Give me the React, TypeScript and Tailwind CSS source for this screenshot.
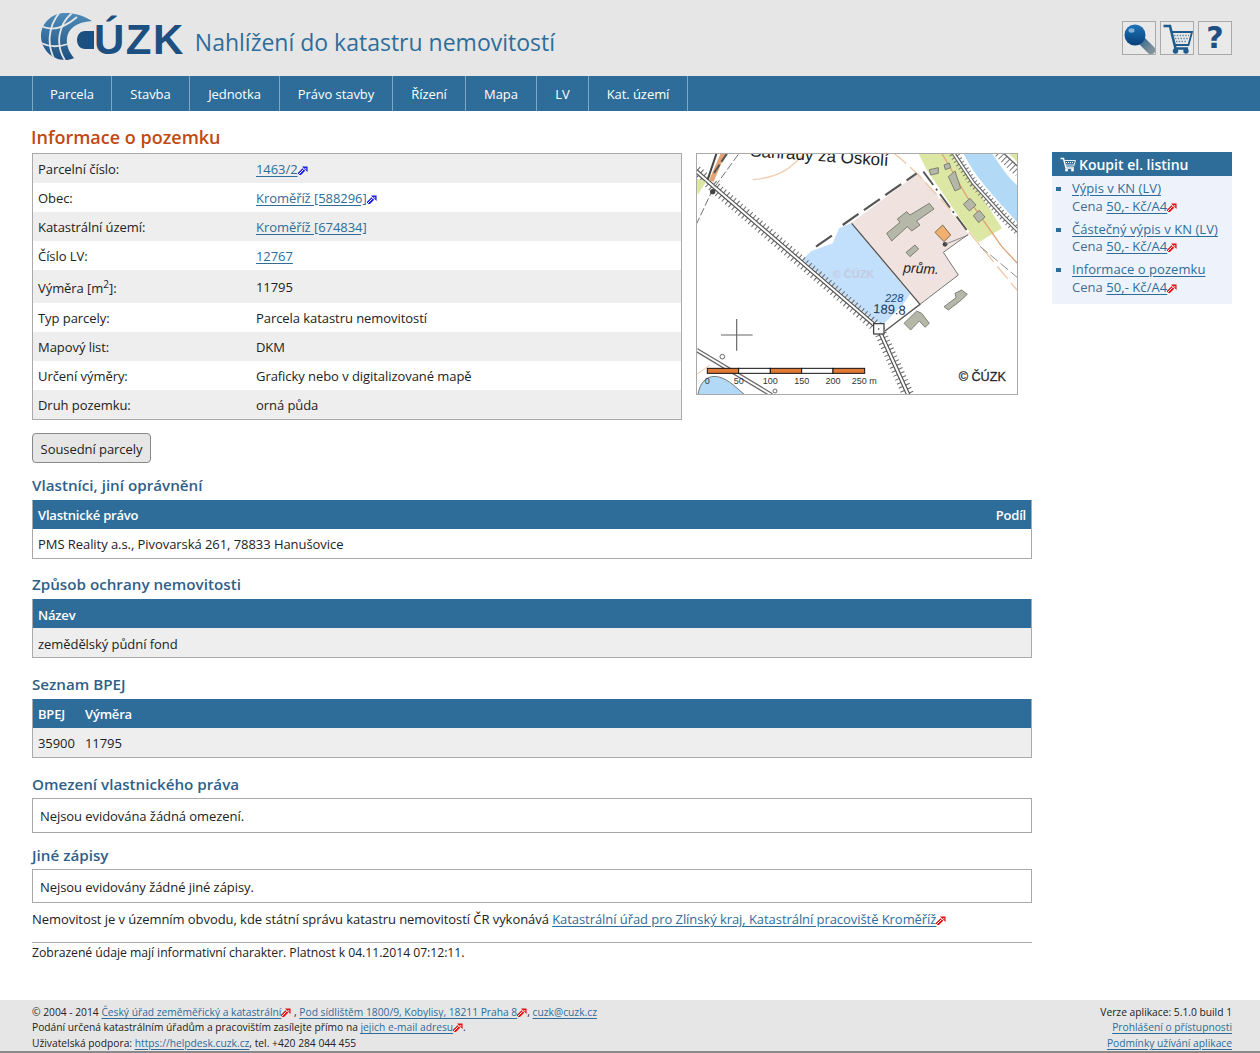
import React from "react";

const FONT = "font-['Open_Sans','Liberation_Sans',sans-serif]";

function Arrow({ color = "#e01010" }: { color?: string }) {
  return (
    <svg width="10" height="9" viewBox="0 0 11 10" className="inline-block align-[-1px]">
      <path d="M1 9.4 L6.5 3.8" stroke={color} strokeWidth="4" fill="none" />
      <path d="M0.8 9.2 L6.2 3.8" stroke="#ffffff" strokeWidth="1.1" fill="none" />
      <path d="M4.4 0.6 H10.6 V6.8 Z" fill={color} />
      <path d="M7 2.2 H9.2 V4.4 Z" fill="#ffffff" opacity="0.7" />
    </svg>
  );
}

function L({ children, ext }: { children: React.ReactNode; ext?: "red" | "blue" }) {
  return (
    <a href="#" className="text-[#2e6d9a] underline underline-offset-2">
      {children}
      {ext === "red" && <Arrow />}
      {ext === "blue" && <Arrow color="#1a1ae0" />}
    </a>
  );
}

function Logo() {
  const outer = "M51 9 C42 3 32 1 24 1 C11 1 0 11 0 24 C0 37 11 48 24 48 C27 48 30 47.5 33 46 C28 40 25 33 26 26 C27 17 35 10 51 9 Z";
  return (
    <div className="flex items-center">
      <svg width="53" height="50" viewBox="0 0 53 50" className="block">
        <defs>
          <clipPath id="g">
            <path d={outer} />
          </clipPath>
          <linearGradient id="gl" x1="0" y1="0" x2="0" y2="1">
            <stop offset="0" stopColor="#4f8cba" />
            <stop offset="1" stopColor="#1d5080" />
          </linearGradient>
        </defs>
        <path d={outer} fill="url(#gl)" />
        <g clipPath="url(#g)" stroke="#e6e6e6" strokeWidth="1.8" fill="none">
          <path d="M0 14 C10 19 22 17 36 5" />
          <path d="M0 31 C8 35 18 35 27 32" />
          <path d="M19 0 C7 14 5 34 15 50" />
          <path d="M31 1 C18 12 13 32 25 50" />
        </g>
        <path d="M53 19 H44 C39 19 36 23 36 28 C36 33 39 37 44 37 H53 Z" fill="#1d5080" />
      </svg>
      <span className="font-['Liberation_Sans',sans-serif] font-bold text-[42px] leading-[40px] text-[#1d5080] tracking-[1.5px] pt-[6px]">ÚZK</span>
    </div>
  );
}

function IconBox({ children }: { children: React.ReactNode }) {
  return (
    <div className="w-[34px] h-[34px] border border-[#aaaaaa] flex items-center justify-center bg-[#e9e9e9]">
      {children}
    </div>
  );
}

function BigCart() {
  return (
    <svg width="32" height="32" viewBox="0 0 32 32">
      <path d="M2.5 4 H9 L14.5 26.5 H27" stroke="#1f5a8c" strokeWidth="2.6" fill="none" />
      <path d="M10.5 10 H31 L27.5 23 H14" stroke="#1f5a8c" strokeWidth="1.8" fill="none" />
      <path d="M13 13.5 H28 M14 16.5 H27 M15 19.5 H26" stroke="#1f5a8c" strokeWidth="1.6" strokeDasharray="1.4 1.4" fill="none" opacity="0.7" />
      <circle cx="14.5" cy="29" r="2.7" fill="#1f5a8c" />
      <circle cx="25" cy="29" r="2.7" fill="#1f5a8c" />
    </svg>
  );
}

function SmallCart() {
  return (
    <svg width="16" height="15" viewBox="0 0 16 15">
      <path d="M0.5 1.5 H3.5 L6 11 H14" stroke="#fff" strokeWidth="1.4" fill="none" />
      <path d="M4.5 3.5 H15.5 L13.8 9 H6" stroke="#fff" strokeWidth="0.9" fill="none" />
      <path d="M6 5.5 H14 M6.5 7.3 H13.5" stroke="#fff" strokeWidth="1" strokeDasharray="1 1" fill="none" />
      <circle cx="6.5" cy="13" r="1.5" fill="#fff" />
      <circle cx="12.5" cy="13" r="1.5" fill="#fff" />
    </svg>
  );
}

const NAV = ["Parcela", "Stavba", "Jednotka", "Právo stavby", "Řízení", "Mapa", "LV", "Kat. území"];

const RW = ["w-[79px]", "w-[78px]", "w-[90px]", "w-[113px]", "w-[73px]", "w-[71px]", "w-[52px]", "w-[100px]"];

function Header() {
  return (
    <header>
      <div className="h-[76px] bg-[#e6e6e6] flex items-center pl-[41px] pr-[28px]">
        <div className="pb-[2px]"><Logo /></div>
        <h1 className="ml-[10px] text-[23px] leading-[30px] pt-[8px] text-[#2e6d9a] font-normal tracking-normal">Nahlížení do katastru nemovitostí</h1>
        <div className="ml-auto flex gap-[4px]">
          <IconBox>
            <svg width="32" height="32" viewBox="0 0 32 32">
              <defs>
                <linearGradient id="kb" x1="0" y1="0" x2="0" y2="1">
                  <stop offset="0" stopColor="#1c74b8" />
                  <stop offset="1" stopColor="#0a3f78" />
                </linearGradient>
                <linearGradient id="kh" x1="0" y1="0" x2="1" y2="1">
                  <stop offset="0" stopColor="#3f6f92" />
                  <stop offset="1" stopColor="#7d8f98" />
                </linearGradient>
              </defs>
              <path d="M19 19 L28 28" stroke="url(#kh)" strokeWidth="8.5" fill="none" strokeLinecap="round" />
              <circle cx="12" cy="13" r="10.5" fill="url(#kb)" />
              <ellipse cx="8.5" cy="8.5" rx="3" ry="2.2" fill="#7fb2dc" />
            </svg>
          </IconBox>
          <IconBox><BigCart /></IconBox>
          <IconBox>
            <span className="font-['DejaVu_Sans',sans-serif] font-bold text-[30px] leading-none text-[#1f4f82]">?</span>
          </IconBox>
        </div>
      </div>
      <nav className="h-[35px] bg-[#2e6d9a] pl-[32px] flex">
        {NAV.map((n, i) => (
          <a key={n} href="#" className={`${RW[i]} h-full border-l border-[#7fa8c4] ${i === NAV.length - 1 ? "border-r" : ""} flex items-center justify-center text-white`}>
            {n}
          </a>
        ))}
      </nav>
    </header>
  );
}

const INFO: [React.ReactNode, React.ReactNode, boolean?][] = [
  ["Parcelní číslo:", <L ext="blue">1463/2</L>],
  ["Obec:", <L ext="blue">Kroměříž [588296]</L>],
  ["Katastrální území:", <L>Kroměříž [674834]</L>],
  ["Číslo LV:", <L>12767</L>],
  [<span className="block pt-[3px]">Výměra [m<sup className="text-[10px]">2</sup>]:</span>, "11795", true],
  ["Typ parcely:", "Parcela katastru nemovitostí"],
  ["Mapový list:", "DKM"],
  ["Určení výměry:", "Graficky nebo v digitalizované mapě"],
  ["Druh pozemku:", "orná půda"],
];

function InfoTable() {
  return (
    <div className="w-[650px] h-[267px] border border-[#aaaaaa]">
      {INFO.map(([a, b, tall], i) => (
        <div key={i} className={`flex items-center pl-[5px] ${tall ? "h-[33px]" : "h-[29px]"} ${i % 2 === 0 ? "bg-[#eeeeee]" : "bg-white"}`}>
          <div className="w-[218px]">{a}</div>
          <div>{b}</div>
        </div>
      ))}
    </div>
  );
}

function MapImg() {
  const sans = "'Liberation Sans',sans-serif";
  return (
    <svg width="322" height="242" viewBox="18 24 966 726" className="bg-white block ml-[14px]">
      <rect x="18" y="24" width="966" height="726" fill="#ffffff" />
      {/* river top right */}
      <path d="M820 24 H905 C930 60 955 100 985 124 V236 C930 175 880 120 855 84 C840 60 830 45 820 24 Z" fill="#b2daf6" />
      {/* green strips */}
      <path d="M685 24 H790 C810 60 830 90 850 114 L936 250 L866 292 L830 250 L710 74 Z" fill="#dde7a4" />
      <path d="M955 24 H985 V54 Z" fill="#dde7a4" />
      {/* pink site */}
      <path d="M483 235 L685 84 L835 266 L760 322 L805 390 L690 478 Z" fill="#f0e2de" />
      {/* blue parcel */}
      <path d="M338 344 L363 319 L428 295 L448 249 L483 235 L660 447 L640 478 L582 536 L555 530 Z" fill="#c2dffb" />
      {/* roads */}
      <path d="M610 24 C700 90 810 230 985 440" stroke="#f0c9a8" strokeWidth="4" fill="none" strokeDasharray="50 16" />
      <path d="M755 24 L790 84 L830 154 L875 219 L935 304 L985 358" stroke="#e2a475" strokeWidth="4" fill="none" />
      <path d="M870 304 L985 400" stroke="#777" strokeWidth="2.5" fill="none" strokeDasharray="30 10" />
      <path d="M188 104 C235 100 268 89 295 70 C315 55 325 45 338 30" stroke="#f0cfb4" strokeWidth="4" fill="none" />
      {/* upper right railways */}
      <path d="M790 24 L850 114 L940 214 L985 259" stroke="#777" strokeWidth="28" strokeDasharray="3 9" fill="none" />
      <path d="M790 24 L850 114 L940 214 L985 259" stroke="#666" strokeWidth="12" fill="none" />
      <path d="M790 24 L850 114 L940 214 L985 259" stroke="#fff" strokeWidth="5" fill="none" />
      <path d="M925 24 L985 84" stroke="#777" strokeWidth="26" strokeDasharray="3 9" fill="none" />
      <path d="M940 24 L985 66" stroke="#666" strokeWidth="4" fill="none" />
      {/* main railway */}
      <path d="M18 78 L60 115 L565 550 L655 750" stroke="#6a6a6a" strokeWidth="36" strokeDasharray="3 10" fill="none" />
      <path d="M18 78 L60 115 L565 550 L655 750" stroke="#555" strokeWidth="13" fill="none" />
      <path d="M18 78 L60 115 L565 550 L655 750" stroke="#fff" strokeWidth="6" fill="none" />
      <path d="M20 615 L245 750" stroke="#666" strokeWidth="13" fill="none" />
      <path d="M20 615 L245 750" stroke="#fff" strokeWidth="6" fill="none" />
      <path d="M18 690 L60 660" stroke="#f0c9a8" strokeWidth="3" fill="none" />
      {/* top left road */}
      <path d="M64 108 L100 24" stroke="#e2a475" strokeWidth="14" fill="none" />
      <path d="M53 104 L80 24" stroke="#444" strokeWidth="6" fill="none" />
      <path d="M72 84 L112 24" stroke="#555" strokeWidth="6" fill="none" strokeDasharray="30 10" />
      <path d="M18 100 L48 110 L23 150 Z" fill="#dde7a4" />
      <path d="M18 240 L68 134 L148 24" stroke="#555" strokeWidth="2.5" strokeDasharray="24 8" fill="none" />
      <circle cx="68" cy="140" r="8" fill="#444" />
      {/* dashed boundary */}
      <path d="M378 305 L440 262 M458 240 L680 85" stroke="#555" strokeWidth="6.5" strokeDasharray="58 20" fill="none" />
      <path d="M700 80 L835 262" stroke="#555" strokeWidth="5.5" strokeDasharray="50 14 6 14" fill="none" />
      {/* solid lines */}
      <path d="M485 235 L690 478 L585 558" stroke="#555" strokeWidth="4" fill="none" />
      <path d="M690 478 L805 390 L760 322 L835 268" stroke="#777" strokeWidth="3" fill="none" />
      {/* buildings */}
      <g fill="#b5b8a8" stroke="#6f7068" strokeWidth="2.5">
        <path d="M590 265 L630 232 L622 222 L650 200 L660 210 L718 175 L732 192 L680 228 L690 240 L665 258 L652 245 L605 288 Z" />
        <path d="M648 322 L675 300 L686 312 L660 335 Z" />
        <path d="M762 485 L798 458 L795 445 L815 435 L832 448 L808 470 L775 495 Z" />
        <path d="M642 535 L680 498 L695 505 L718 535 L705 547 L688 528 L662 555 Z" />
        <path d="M820 178 L840 160 L858 180 L838 198 Z" />
        <path d="M850 212 L868 196 L885 216 L866 233 Z" />
        <path d="M775 95 L795 78 L812 130 L795 138 Z" />
        <path d="M718 74 L745 68 L745 85 L722 90 Z" />
        <path d="M762 60 L778 54 L782 68 L766 74 Z" />
      </g>
      <path d="M735 262 L758 240 L782 270 L762 290 Z" fill="#f2b070" stroke="#6a5a3a" strokeWidth="2.5" />
      <circle cx="765" cy="298" r="7" fill="#444" />
      <path d="M765 298 L835 270" stroke="#777" strokeWidth="2.5" />
      {/* trig mark */}
      <rect x="551" y="536" width="31" height="31" fill="#fff" stroke="#333" strokeWidth="3.5" />
      <circle cx="566" cy="552" r="2.5" fill="#333" />
      {/* cross */}
      <path d="M93 570 H188 M140 522 V617" stroke="#666" strokeWidth="3.5" />
      {/* small symbols */}
      <circle cx="97" cy="635" r="7" fill="#fff" stroke="#666" strokeWidth="3" />
      <circle cx="255" cy="738" r="6" fill="#fff" stroke="#666" strokeWidth="3" />
      <path d="M24 750 C30 700 70 670 130 720 L165 750 Z" fill="#b2daf6" stroke="#777" strokeWidth="3" />
      {/* texts */}
      <text x="180" y="34" fontSize="51" fontFamily={sans} fill="#222" transform="rotate(4 180 34)">Sahrady za Oskolí</text>
      <text x="640" y="385" fontSize="42" fontStyle="italic" fontFamily={sans} fill="#222" transform="rotate(3 690 370)">prům.</text>
      <text x="585" y="470" fontSize="33" fontStyle="italic" fontFamily={sans} fill="#1a4a7a">228</text>
      <text x="550" y="507" fontSize="39" fontFamily={sans} fill="#1a3a5a" transform="rotate(3 600 490)">189.8</text>
      <text x="428" y="398" fontSize="33" fontWeight="700" fontFamily={sans} fill="#c3cbdf">© ČÚZK</text>
      <text x="806" y="707" fontSize="38" fontFamily={sans} stroke="#333" strokeWidth="0.8" fill="#222">© ČÚZK</text>
      {/* scale */}
      <g stroke="#111" strokeWidth="3">
        <rect x="52" y="670" width="94" height="15" fill="#e07a35" />
        <rect x="146" y="670" width="95" height="15" fill="#fff" />
        <rect x="241" y="670" width="94" height="15" fill="#e07a35" />
        <rect x="335" y="670" width="94" height="15" fill="#fff" />
        <rect x="429" y="670" width="95" height="15" fill="#e07a35" />
      </g>
      <g fontSize="27" fontFamily={sans} fill="#333" textAnchor="middle">
        <text x="52" y="717">0</text>
        <text x="146" y="717">50</text>
        <text x="241" y="717">100</text>
        <text x="335" y="717">150</text>
        <text x="429" y="717">200</text>
        <text x="523" y="717">250 m</text>
      </g>
      <rect x="19.5" y="25.5" width="963" height="723" fill="none" stroke="#aaaaaa" strokeWidth="3" />
    </svg>
  );
}

function Sidebar() {
  const items = ["Výpis v KN (LV)", "Částečný výpis v KN (LV)", "Informace o pozemku"];
  return (
    <aside className="w-[180px] ml-[20px] mt-[41px]">
      <div className="h-[24px] bg-[#2e6d9a] flex items-center pl-[8px] pt-[1px] gap-[3px] text-white font-semibold text-[14px] tracking-normal">
        <SmallCart />
        Koupit el. listinu
      </div>
      <ul className="bg-[#eef3fb] pt-[4px] h-[128px] flex flex-col gap-[5.4px]">
        {items.map((t) => (
          <li key={t} className="relative pl-[20px] leading-[17.6px] tracking-[0.05px] text-[#3b6f96]">
            <span className="absolute left-[4px] top-[7px] w-[5px] h-[4px] bg-[#2e6d9a]" />
            <L>{t}</L>
            <br />
            Cena <L ext="red">50,- Kč/A4</L>
          </li>
        ))}
      </ul>
    </aside>
  );
}

function H2({ children, cls }: { children: React.ReactNode; cls: string }) {
  return <h2 className={`text-[15.2px] tracking-normal leading-[22px] font-semibold text-[#2f5f88] ${cls}`}>{children}</h2>;
}

function DataTable({ head, row, gray, shift }: { head: React.ReactNode; row: React.ReactNode; gray?: boolean; shift?: boolean }) {
  return (
    <div className="border-x border-b border-[#aaaaaa]">
      <div className={`h-[29px] bg-[#2e6d9a] text-white font-semibold tracking-[-0.2px] px-[5px] ${shift ? "pt-[3px]" : "pt-[1px]"} flex items-center`}>{head}</div>
      <div className={`h-[29px] px-[5px] ${shift ? "pt-[2px]" : ""} flex items-center ${gray ? "bg-[#eeeeee]" : "bg-white"}`}>{row}</div>
    </div>
  );
}

function Box({ children, h }: { children: React.ReactNode; h: string }) {
  return <div className={`${h} border border-[#aaaaaa] pl-[7px] flex items-center`}>{children}</div>;
}

function Main() {
  return (
    <main className="w-[1000px] ml-[32px]">
      <h1 className="ml-[-1px] pt-[13px] h-[42px] text-[18px] tracking-normal leading-[26px] font-semibold text-[#c04a10]">Informace o pozemku</h1>
      <div className="flex">
        <InfoTable />
        <MapImg />
      </div>
      <button className="mt-[13px] w-[119px] h-[30px] pt-[1px] rounded-[4px] border border-[#888888] bg-[#e6e6e6] text-[#222]">Sousední parcely</button>
      <H2 cls="mt-[11px] mb-[4px]">Vlastníci, jiní oprávnění</H2>
      <DataTable head={<><span>Vlastnické právo</span><span className="ml-auto">Podíl</span></>} row="PMS Reality a.s., Pivovarská 261, 78833 Hanušovice" />
      <H2 cls="mt-[14px] mb-[4px]">Způsob ochrany nemovitosti</H2>
      <DataTable head="Název" row="zemědělský půdní fond" gray shift />
      <H2 cls="mt-[15px] mb-[4px]">Seznam BPEJ</H2>
      <DataTable head={<><span className="w-[47px]">BPEJ</span><span>Výměra</span></>} row={<><span className="w-[47px]">35900</span><span>11795</span></>} gray />
      <H2 cls="mt-[15px] mb-[3px]">Omezení vlastnického práva</H2>
      <Box h="h-[35px]">Nejsou evidována žádná omezení.</Box>
      <H2 cls="mt-[11px] mb-[3px]">Jiné zápisy</H2>
      <Box h="h-[34px] pt-[1px]">Nejsou evidovány žádné jiné zápisy.</Box>
      <p className="mt-[6px] leading-[20px]">
        Nemovitost je v územním obvodu, kde státní správu katastru nemovitostí ČR vykonává{" "}
        <L ext="red">Katastrální úřad pro Zlínský kraj, Katastrální pracoviště Kroměříž</L>
      </p>
      <div className="mt-[13px] border-t border-[#aaaaaa] pt-[1px] leading-[18px] text-[12.25px]">
        Zobrazené údaje mají informativní charakter. Platnost k 04.11.2014 07:12:11.
      </div>
    </main>
  );
}

function Footer() {
  return (
    <footer className="mt-[38px] h-[53px] bg-[#e6e6e6] border-b-2 border-[#8a8a8a] pl-[32px] pr-[28px] pt-[5px] flex justify-between text-[10.25px] tracking-normal leading-[15.3px]">
      <div>
        <div>© 2004 - 2014 <L ext="red">Český úřad zeměměřický a katastrální</L> , <L ext="red">Pod sídlištěm 1800/9, Kobylisy, 18211 Praha 8</L>, <L>cuzk@cuzk.cz</L></div>
        <div>Podání určená katastrálním úřadům a pracovištím zasílejte přímo na <L ext="red">jejich e-mail adresu</L>.</div>
        <div>Uživatelská podpora: <L>https://helpdesk.cuzk.cz</L>, tel. +420 284 044 455</div>
      </div>
      <div className="text-right">
        <div>Verze aplikace: 5.1.0 build 1</div>
        <div><L>Prohlášení o přístupnosti</L></div>
        <div><L>Podmínky užívání aplikace</L></div>
      </div>
    </footer>
  );
}

export default function App() {
  return (
    <div className={`${FONT} w-[1260px] text-[13px] tracking-[-0.06px] leading-[20px] text-[#222222] bg-white`}>
      <Header />
      <div className="flex">
        <Main />
        <Sidebar />
      </div>
      <Footer />
    </div>
  );
}
